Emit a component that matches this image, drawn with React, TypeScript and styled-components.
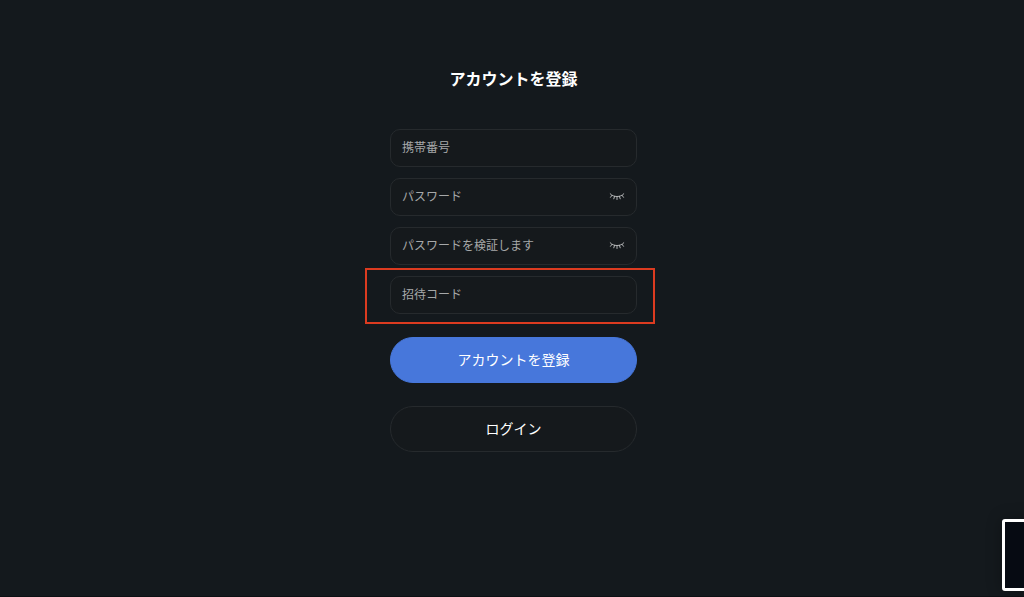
import React from 'react';
import styled, { createGlobalStyle } from 'styled-components';

const GlobalStyle = createGlobalStyle`
  *, *::before, *::after { box-sizing: border-box; }
  body {
    margin: 0;
    background: #14191d;
    color: #fff;
    font-family: "Liberation Sans", "Noto Sans CJK JP", sans-serif;
  }
`;

const Page = styled.main`
  min-height: 100vh;
  padding: 68px 0 48px 3px;
  border-bottom: 1px solid #0d1014;
  overflow: hidden;
`;

const Form = styled.form`
  width: 247px;
  max-width: 100%;
  margin: 0 auto;
  display: flex;
  flex-direction: column;
`;

const Title = styled.h1`
  margin: 0 0 37px;
  font-size: 16px;
  line-height: 24px;
  font-weight: 700;
  text-align: center;
  white-space: nowrap;
`;

const Fields = styled.div`
  display: flex;
  flex-direction: column;
  gap: 11px;
`;

const Field = styled.div`
  position: relative;
  display: flex;
  align-items: center;
  height: 38px;
  padding: 0 11px;
  border: 1px solid #262a2d;
  border-radius: 10px;
  background: #15191c;
`;

const Highlight = styled.span`
  position: absolute;
  inset: -9px -19px -11px -26px;
  border: 2px solid #dc3b20;
  pointer-events: none;
`;

const Input = styled.input`
  flex: 1;
  min-width: 0;
  height: 36px;
  padding: 0;
  border: 0;
  outline: 0;
  background: transparent;
  color: #fff;
  font: inherit;
  font-size: 12px;

  &::placeholder {
    color: #a6a8a9;
    opacity: 1;
  }
`;

const IconButton = styled.button`
  display: flex;
  padding: 0;
  border: 0;
  background: none;
  color: #b4b6b7;
  cursor: pointer;
`;

const Actions = styled.div`
  display: flex;
  flex-direction: column;
  gap: 23px;
  margin-top: 23px;
`;

const Button = styled.button<{ $primary?: boolean }>`
  height: 46px;
  padding: 0 0 2px;
  border: 1px solid ${(p) => (p.$primary ? '#4777db' : '#262a2d')};
  border-radius: 23px;
  background: ${(p) => (p.$primary ? '#4777db' : '#15191c')};
  color: #fff;
  font: inherit;
  font-size: 14px;
  cursor: pointer;
`;

const Widget = styled.aside`
  position: fixed;
  right: -50px;
  bottom: 6px;
  width: 72px;
  height: 72px;
  border: 3px solid #fff;
  border-radius: 3px;
  background: #060a12;
  box-shadow: 0 0 16px rgba(0, 0, 0, 0.3);
`;

const ClosedEye = () => (
  <svg width="16" height="10" viewBox="0 0 16 10" fill="none" stroke="currentColor" strokeLinecap="round" aria-hidden="true">
    <path d="M1.200 1.800C3 3.700 5.300 4.500 8 4.500s5-.8 6.800-2.700M1.500 5.300l1.400-1.900M4.800 6.800l.8-2.500M8 7.500v-3M11.200 6.800l-.8-2.500M14.500 5.300l-1.400-1.900" />
  </svg>
);

interface FieldSpec {
  id: string;
  label: string;
  type: string;
  highlighted?: boolean;
}

const fields: FieldSpec[] = [
  { id: 'phone', label: '携帯番号', type: 'tel' },
  { id: 'password', label: 'パスワード', type: 'password' },
  { id: 'confirm', label: 'パスワードを検証します', type: 'password' },
  { id: 'invite', label: '招待コード', type: 'text', highlighted: true },
];

export default function App() {
  return (
    <>
      <GlobalStyle />
      <Page lang="ja">
        <Form onSubmit={(e) => e.preventDefault()}>
          <Title>アカウントを登録</Title>
          <Fields>
            {fields.map((f) => (
              <Field key={f.id}>
                <Input id={f.id} type={f.type} placeholder={f.label} aria-label={f.label} />
                {f.type === 'password' && (
                  <IconButton type="button" aria-label="パスワードを表示">
                    <ClosedEye />
                  </IconButton>
                )}
                {f.highlighted && <Highlight />}
              </Field>
            ))}
          </Fields>
          <Actions>
            <Button type="submit" $primary>アカウントを登録</Button>
            <Button type="button">ログイン</Button>
          </Actions>
        </Form>
        <Widget />
      </Page>
    </>
  );
}
